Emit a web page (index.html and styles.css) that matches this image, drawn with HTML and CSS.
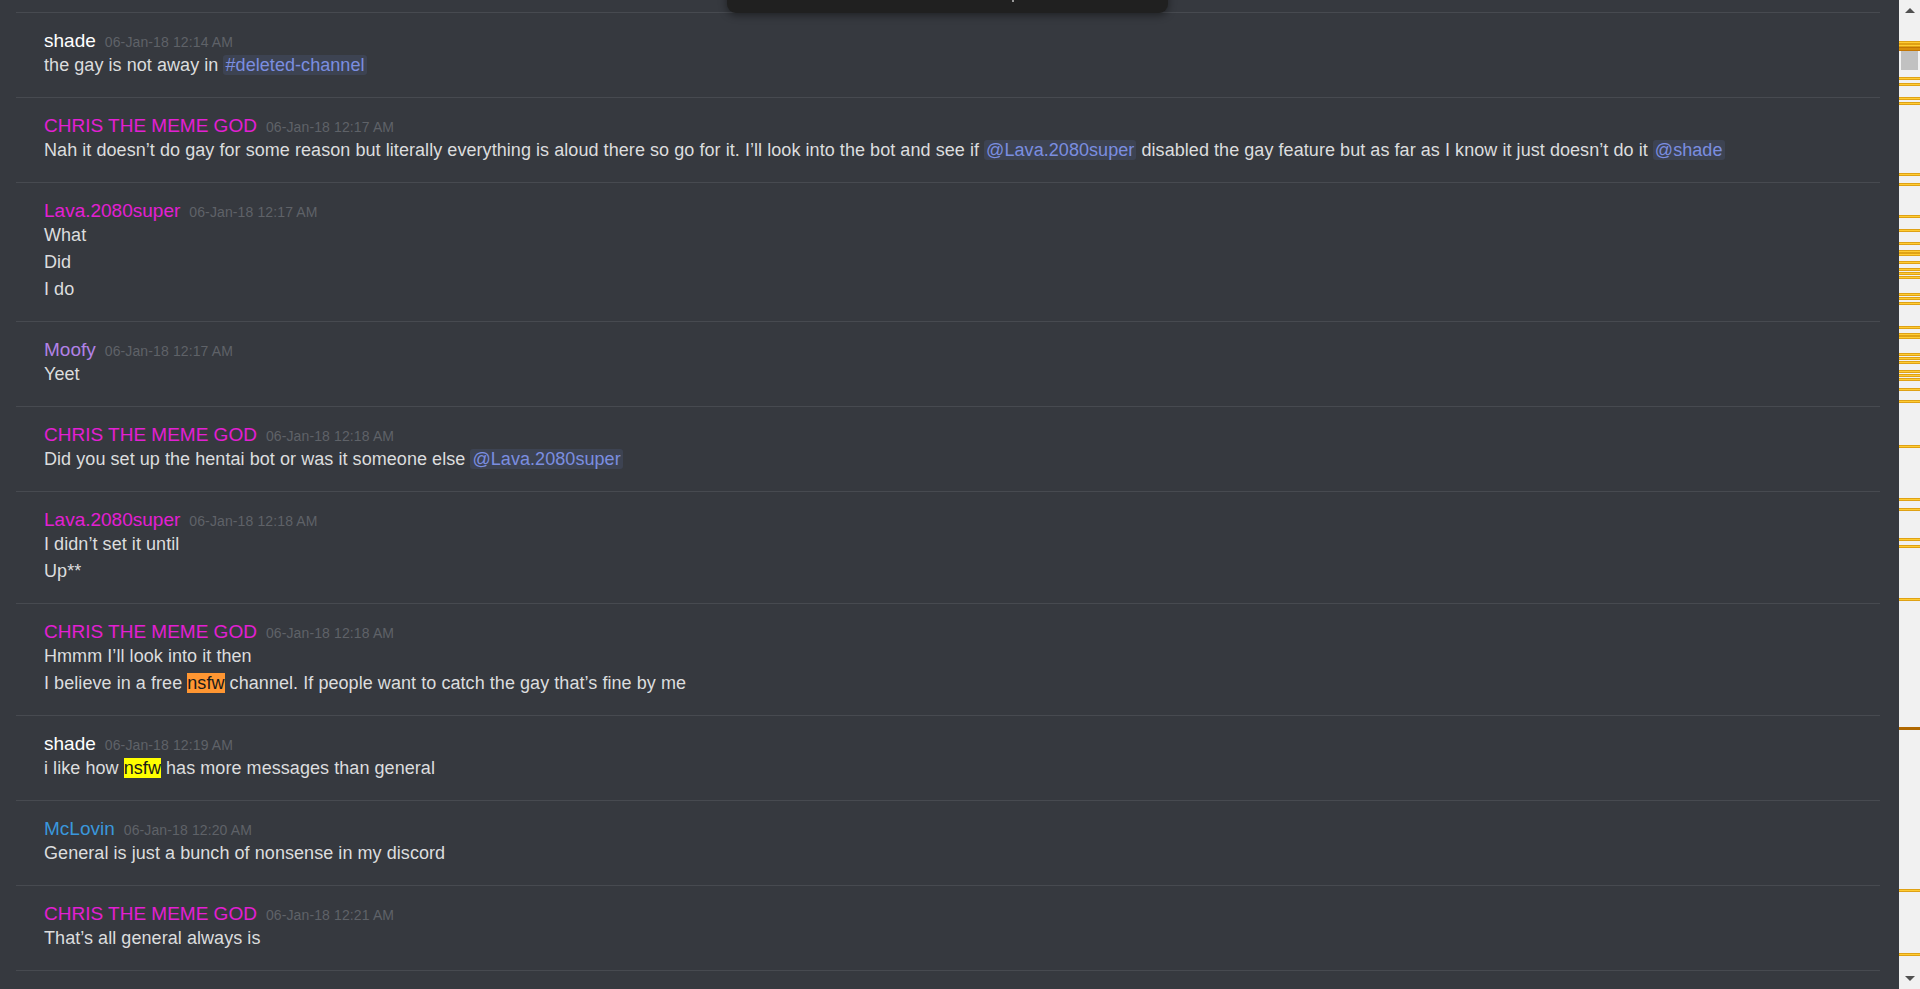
FILE: index.html
```html
<!DOCTYPE html>
<html lang="en">
<head>
<meta charset="utf-8">
<title>Chat log</title>
<link rel="stylesheet" href="styles.css">
</head>
<body>
<main class="chat">
  <div class="prev"></div>

  <section class="msg">
    <div class="head"><span class="user u-white">shade</span><span class="time">06-Jan-18 12:14 AM</span></div>
    <div class="line">the gay is not away in <span class="mention">#deleted-channel</span></div>
  </section>

  <section class="msg">
    <div class="head"><span class="user u-pink">CHRIS THE MEME GOD</span><span class="time">06-Jan-18 12:17 AM</span></div>
    <div class="line">Nah it doesn’t do gay for some reason but literally everything is aloud there so go for it. I’ll look into the bot and see if <span class="mention">@Lava.2080super</span> disabled the gay feature but as far as I know it just doesn’t do it <span class="mention">@shade</span></div>
  </section>

  <section class="msg">
    <div class="head"><span class="user u-pink">Lava.2080super</span><span class="time">06-Jan-18 12:17 AM</span></div>
    <div class="line">What</div>
    <div class="line">Did</div>
    <div class="line">I do</div>
  </section>

  <section class="msg">
    <div class="head"><span class="user u-purple">Moofy</span><span class="time">06-Jan-18 12:17 AM</span></div>
    <div class="line">Yeet</div>
  </section>

  <section class="msg">
    <div class="head"><span class="user u-pink">CHRIS THE MEME GOD</span><span class="time">06-Jan-18 12:18 AM</span></div>
    <div class="line">Did you set up the hentai bot or was it someone else <span class="mention">@Lava.2080super</span></div>
  </section>

  <section class="msg">
    <div class="head"><span class="user u-pink">Lava.2080super</span><span class="time">06-Jan-18 12:18 AM</span></div>
    <div class="line">I didn’t set it until</div>
    <div class="line">Up**</div>
  </section>

  <section class="msg">
    <div class="head"><span class="user u-pink">CHRIS THE MEME GOD</span><span class="time">06-Jan-18 12:18 AM</span></div>
    <div class="line">Hmmm I’ll look into it then</div>
    <div class="line">I believe in a free <mark class="find find-active">nsfw</mark> channel. If people want to catch the gay that’s fine by me</div>
  </section>

  <section class="msg">
    <div class="head"><span class="user u-white">shade</span><span class="time">06-Jan-18 12:19 AM</span></div>
    <div class="line">i like how <mark class="find">nsfw</mark> has more messages than general</div>
  </section>

  <section class="msg">
    <div class="head"><span class="user u-blue">McLovin</span><span class="time">06-Jan-18 12:20 AM</span></div>
    <div class="line">General is just a bunch of nonsense in my discord</div>
  </section>

  <section class="msg">
    <div class="head"><span class="user u-pink">CHRIS THE MEME GOD</span><span class="time">06-Jan-18 12:21 AM</span></div>
    <div class="line">That’s all general always is</div>
  </section>
</main>

<aside class="scrollbar">
  <div class="arrow arrow-up"></div>
  <div class="track">
    <div class="thumb"></div>
    <i class="tick" style="top:20px"></i>
    <i class="tick" style="top:23px"></i>
    <i class="tick tick-active" style="top:26px"></i>
    <i class="tick" style="top:56px"></i>
    <i class="tick" style="top:62px"></i>
    <i class="tick" style="top:76px"></i>
    <i class="tick" style="top:81px"></i>
    <i class="tick" style="top:152px"></i>
    <i class="tick" style="top:162px"></i>
    <i class="tick" style="top:194px"></i>
    <i class="tick" style="top:208px"></i>
    <i class="tick" style="top:221px"></i>
    <i class="tick" style="top:229px"></i>
    <i class="tick" style="top:232px"></i>
    <i class="tick" style="top:240px"></i>
    <i class="tick" style="top:247px"></i>
    <i class="tick" style="top:251px"></i>
    <i class="tick" style="top:255px"></i>
    <i class="tick" style="top:272px"></i>
    <i class="tick" style="top:276px"></i>
    <i class="tick" style="top:281px"></i>
    <i class="tick" style="top:305px"></i>
    <i class="tick" style="top:312px"></i>
    <i class="tick" style="top:315px"></i>
    <i class="tick" style="top:332px"></i>
    <i class="tick" style="top:336px"></i>
    <i class="tick" style="top:340px"></i>
    <i class="tick" style="top:349px"></i>
    <i class="tick" style="top:353px"></i>
    <i class="tick" style="top:357px"></i>
    <i class="tick" style="top:367px"></i>
    <i class="tick" style="top:379px"></i>
    <i class="tick" style="top:424px"></i>
    <i class="tick" style="top:477px"></i>
    <i class="tick" style="top:487px"></i>
    <i class="tick" style="top:517px"></i>
    <i class="tick" style="top:524px"></i>
    <i class="tick" style="top:577px"></i>
    <i class="tick tick-dark" style="top:706px"></i>
    <i class="tick" style="top:868px"></i>
    <i class="tick" style="top:932px"></i>
  </div>
  <div class="arrow arrow-down"></div>
</aside>

<div class="findbar"><span class="findbar-dot"></span></div>
</body>
</html>
```

FILE: styles.css
```css
html, body {
  margin: 0;
  padding: 0;
  height: 100%;
}

body {
  background: #36393f;
  font-family: "Liberation Sans", Arial, sans-serif;
  display: flex;
  overflow: hidden;
  position: relative;
}

.chat {
  flex: 1;
  padding: 0 19px 0 16px;
  min-width: 0;
}

.prev {
  height: 12px;
  border-bottom: 1px solid #474a50;
}

.msg {
  padding: 17px 0 18px 28px;
  border-bottom: 1px solid #474a50;
}

.head {
  height: 22px;
  line-height: 22px;
  white-space: nowrap;
}

.user {
  font-size: 19px;
}

.u-white { color: #ffffff; }
.u-pink { color: #e31fd3; }
.u-purple { color: #b282e6; }
.u-blue { color: #3a97dc; }

.time {
  font-size: 14px;
  letter-spacing: 0.12px;
  color: #5f6268;
  margin-left: 9px;
}

.line {
  font-size: 18px;
  line-height: 27px;
  letter-spacing: 0.06px;
  color: #dcddde;
  white-space: nowrap;
}

.mention {
  color: #7b8ee0;
  background: rgba(114, 137, 218, 0.12);
  border-radius: 3px;
  padding: 0 2px;
}

.find {
  background: #ffff00;
  color: #1a1a1a;
  padding: 0;
}

.find-active {
  background: #ff9632;
}

.scrollbar {
  width: 21px;
  flex: none;
  background: #f1f1f1;
  display: flex;
  flex-direction: column;
}

.arrow {
  height: 21px;
  flex: none;
  display: flex;
  align-items: center;
  justify-content: center;
}

.arrow::before {
  content: "";
  width: 0;
  height: 0;
  border-left: 5px solid transparent;
  border-right: 5px solid transparent;
}

.arrow-up::before {
  border-bottom: 5px solid #505050;
}

.arrow-down::before {
  border-top: 5px solid #505050;
}

.track {
  flex: 1;
  position: relative;
}

.thumb {
  position: absolute;
  left: 2px;
  right: 2px;
  top: 26px;
  height: 23px;
  background: #c1c1c1;
}

.tick {
  position: absolute;
  left: 0;
  right: 0;
  height: 3px;
  background: linear-gradient(#c88300, #ffcc33 40%, #ffcc33 60%, #c88300);
}

.tick-active {
  height: 4px;
  background: linear-gradient(#b86a00, #e29a10, #b86a00);
}

.tick-dark {
  height: 3px;
  background: #b06800;
}

.findbar {
  position: absolute;
  left: 727px;
  top: -20px;
  width: 441px;
  height: 33px;
  background: #202020;
  border-radius: 0 0 9px 9px;
  box-shadow: 0 2px 8px rgba(0, 0, 0, 0.45);
}

.findbar-dot {
  position: absolute;
  left: 285px;
  top: 20px;
  width: 2px;
  height: 2px;
  background: #9a9a9a;
}
```
